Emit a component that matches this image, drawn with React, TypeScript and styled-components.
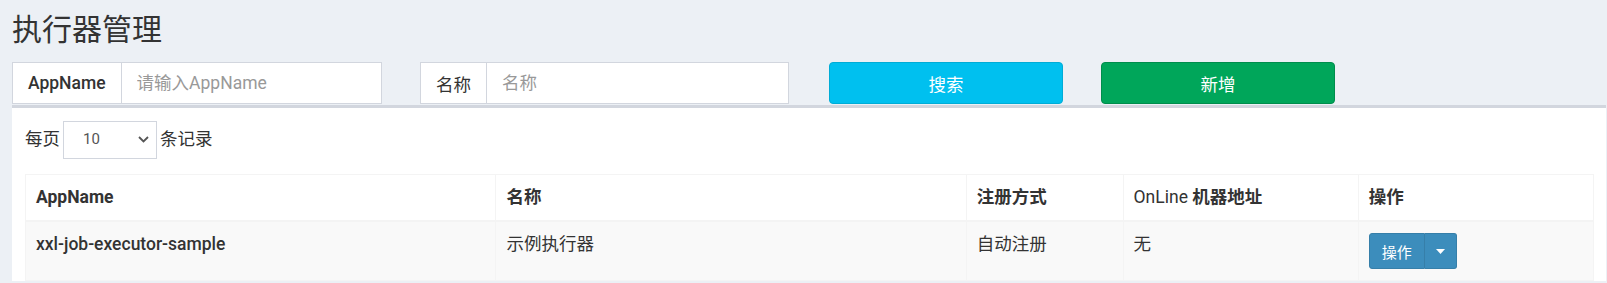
import React from 'react'
import styled, { createGlobalStyle } from 'styled-components'

const GlobalStyle = createGlobalStyle`
  html, body {
    margin: 0;
    padding: 0;
    background: #ecf0f5;
  }
  body {
    font-family: Roboto, "Noto Sans CJK SC", sans-serif;
    color: #333;
    font-size: 17.5px;
  }
`

const Wrapper = styled.div`
  padding: 11px 1px 0 12px;
  min-height: 283px;
  box-sizing: border-box;
`

const Title = styled.h1`
  margin: 0;
  font-family: "Noto Sans CJK SC", sans-serif;
  font-size: 30px;
  line-height: 33px;
  font-weight: 400;
  color: #333;
`

const Toolbar = styled.div`
  display: grid;
  grid-template-columns: 408px 409px 272px 272px;
  margin-top: 18px;
`

const InputGroup = styled.div<{ $width: number }>`
  display: flex;
  width: ${p => p.$width}px;
  height: 42px;
  box-sizing: border-box;
  border: 1px solid #d2d6de;
  background: #fff;
`

const Addon = styled.span<{ $bold?: boolean }>`
  display: flex;
  align-items: center;
  padding: 0 15px;
  border-right: 1px solid #d2d6de;
  font-weight: ${p => (p.$bold ? 500 : 400)};
  color: #333;
  white-space: nowrap;
`

const TextInput = styled.input`
  flex: 1;
  min-width: 0;
  border: none;
  outline: none;
  padding: 0 15px;
  font-family: inherit;
  font-size: 17.5px;
  color: #555;
  background: transparent;
  &::placeholder {
    color: #999;
  }
`

const ActionButton = styled.button<{ $bg: string; $border: string }>`
  width: 234px;
  height: 42px;
  border: 1px solid ${p => p.$border};
  border-radius: 4px;
  background: ${p => p.$bg};
  color: #fff;
  font-family: inherit;
  font-size: 17.5px;
  padding: 0;
`

const Box = styled.div`
  margin-top: 1px;
  border-top: 3px solid #d2d6de;
  background: #fff;
  padding: 13px 12px 0 13px;
`

const LengthRow = styled.div`
  display: flex;
  align-items: center;
  gap: 3px;
  line-height: 25px;
`

const SelectBox = styled.div`
  display: flex;
  align-items: center;
  justify-content: space-between;
  width: 94px;
  height: 37.5px;
  box-sizing: border-box;
  border: 1px solid #d2d6de;
  padding: 0 7px 0 19px;
  font-size: 15px;
  color: #555;
`

const Table = styled.table`
  margin-top: 15px;
  width: 100%;
  border-collapse: collapse;
  table-layout: fixed;
  border: 1px solid #f4f4f4;
`

const HeadCell = styled.th`
  padding: 10px;
  text-align: left;
  font-weight: 700;
  line-height: 25px;
  border: 1px solid #f4f4f4;
  border-bottom-width: 2.5px;
  white-space: nowrap;
`

const LightText = styled.span`
  font-weight: 400;
`

const Row = styled.tr`
  background: #f9f9f9;
`

const Cell = styled.td<{ $bold?: boolean }>`
  padding: 10px;
  vertical-align: top;
  line-height: 25px;
  border: 1px solid #f4f4f4;
  font-weight: ${p => (p.$bold ? 500 : 400)};
`

const SplitButton = styled.div`
  display: inline-flex;
  vertical-align: top;
  height: 36px;
  margin: 1.5px 0 1px;
`

const SplitMain = styled.button`
  width: 56px;
  height: 36px;
  border: 1px solid #367fa9;
  border-radius: 3px 0 0 3px;
  background: #3c8dbc;
  color: #fff;
  font-family: "Noto Sans CJK SC", sans-serif;
  font-size: 15px;
  padding: 0;
`

const SplitCaret = styled.button`
  display: flex;
  align-items: center;
  justify-content: center;
  width: 32px;
  height: 36px;
  border: 1px solid #367fa9;
  border-left: none;
  border-radius: 0 3px 3px 0;
  background: #3c8dbc;
  padding: 0;
`

const columns = [
  { key: 'appname', width: '30%' },
  { key: 'title', width: '30%' },
  { key: 'type', width: '10%' },
  { key: 'addr', width: '15%' },
  { key: 'op', width: '15%' },
]

const App = () => {
  return (
    <Wrapper>
      <GlobalStyle />
      <Title>执行器管理</Title>
      <Toolbar>
        <InputGroup $width={370}>
          <Addon $bold>AppName</Addon>
          <TextInput placeholder="请输入AppName" />
        </InputGroup>
        <InputGroup $width={369}>
          <Addon>名称</Addon>
          <TextInput placeholder="名称" />
        </InputGroup>
        <div>
          <ActionButton $bg="#00c0ef" $border="#00acd6">搜索</ActionButton>
        </div>
        <div>
          <ActionButton $bg="#00a65a" $border="#008d4c">新增</ActionButton>
        </div>
      </Toolbar>
      <Box>
        <LengthRow>
          <span>每页</span>
          <SelectBox>
            <span>10</span>
            <svg width="11" height="7" viewBox="0 0 11 7">
              <path d="M1 1l4.5 4.5L10 1" fill="none" stroke="#555" strokeWidth="1.8" />
            </svg>
          </SelectBox>
          <span>条记录</span>
        </LengthRow>
        <Table>
          <colgroup>
            {columns.map(c => (
              <col key={c.key} style={{ width: c.width }} />
            ))}
          </colgroup>
          <thead>
            <tr>
              <HeadCell>AppName</HeadCell>
              <HeadCell>名称</HeadCell>
              <HeadCell>注册方式</HeadCell>
              <HeadCell>
                <LightText>OnLine</LightText> 机器地址
              </HeadCell>
              <HeadCell>操作</HeadCell>
            </tr>
          </thead>
          <tbody>
            <Row>
              <Cell $bold>xxl-job-executor-sample</Cell>
              <Cell>示例执行器</Cell>
              <Cell>自动注册</Cell>
              <Cell>无</Cell>
              <Cell>
                <SplitButton>
                  <SplitMain>操作</SplitMain>
                  <SplitCaret>
                    <svg width="9" height="5" viewBox="0 0 9 5">
                      <path d="M0 0h9L4.5 5z" fill="#fff" />
                    </svg>
                  </SplitCaret>
                </SplitButton>
              </Cell>
            </Row>
          </tbody>
        </Table>
      </Box>
    </Wrapper>
  )
}

export default App
